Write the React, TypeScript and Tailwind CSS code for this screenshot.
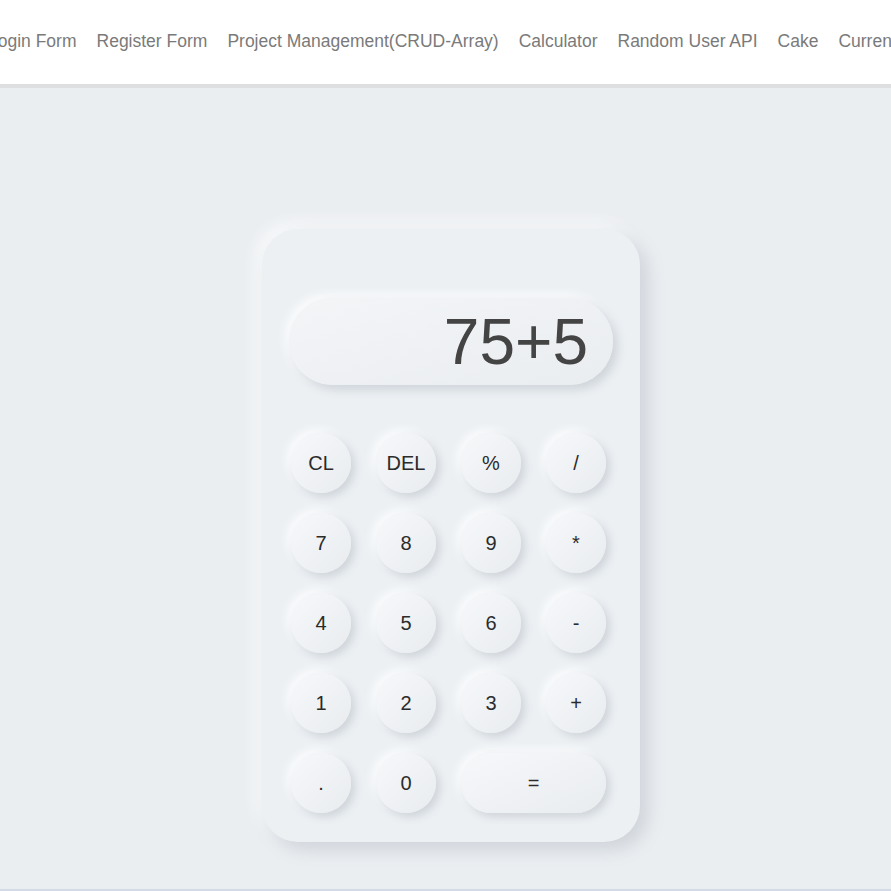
import React from 'react';

const navItems = [
  'Login Form',
  'Register Form',
  'Project Management(CRUD-Array)',
  'Calculator',
  'Random User API',
  'Cake',
  'Currency Converter',
];

const keys = [
  'CL', 'DEL', '%', '/',
  '7', '8', '9', '*',
  '4', '5', '6', '-',
  '1', '2', '3', '+',
  '.', '0',
];

const App = () => {
  return (
    <div className="h-[891px] overflow-hidden bg-[#ebeef1] flex flex-col" style={{ fontFamily: '"Liberation Sans", Arial, sans-serif' }}>
      {/* Navbar */}
      <nav className="h-[88px] shrink-0 bg-white border-b-4 border-[#dedfe0] overflow-hidden">
        <ul className="h-full flex items-center gap-5 -ml-[12px] pb-[2px] whitespace-nowrap">
          {navItems.map((item) => (
            <li key={item} className="text-[17.5px] text-[#7a7a7a]">
              {item}
            </li>
          ))}
        </ul>
      </nav>

      {/* Calculator */}
      <main className="flex-1 flex justify-center pt-[141px] pl-[11px]">
        <div className="w-[378px] h-[613px] rounded-[36px] bg-[#ecf0f3] shadow-[8px_8px_18px_#cfd4da,-6px_-6px_14px_#f8fafb] px-[29px] pt-[69px]">
          <div className="-mx-[2px] h-[87px] rounded-[44px] bg-gradient-to-br from-[#f3f5f7] to-[#eaedf0] shadow-[5px_5px_10px_#d0d5db,-4px_-4px_10px_#fbfcfd] flex items-center justify-end pr-[25px] text-[64px] text-[#444444]">
            75+5
          </div>
          <div className="mt-[48px] grid grid-cols-[repeat(4,60px)] gap-x-[25px] gap-y-[20px]">
            {keys.map((k) => (
              <button
                key={k}
                className="w-[60px] h-[60px] rounded-full bg-gradient-to-br from-[#f6f8fa] to-[#e9ecef] shadow-[4px_4px_9px_#cfd4da,-4px_-4px_9px_#fbfcfd] text-[20px] text-[#2b2b2b] flex items-center justify-center"
              >
                {k}
              </button>
            ))}
            <button className="col-span-2 h-[60px] rounded-full bg-gradient-to-br from-[#f6f8fa] to-[#e9ecef] shadow-[4px_4px_9px_#cfd4da,-4px_-4px_9px_#fbfcfd] text-[20px] text-[#2b2b2b] flex items-center justify-center">
              =
            </button>
          </div>
        </div>
      </main>

      <div className="h-[2px] shrink-0 bg-[#d3dbe8]" />
    </div>
  );
};

export default App;
